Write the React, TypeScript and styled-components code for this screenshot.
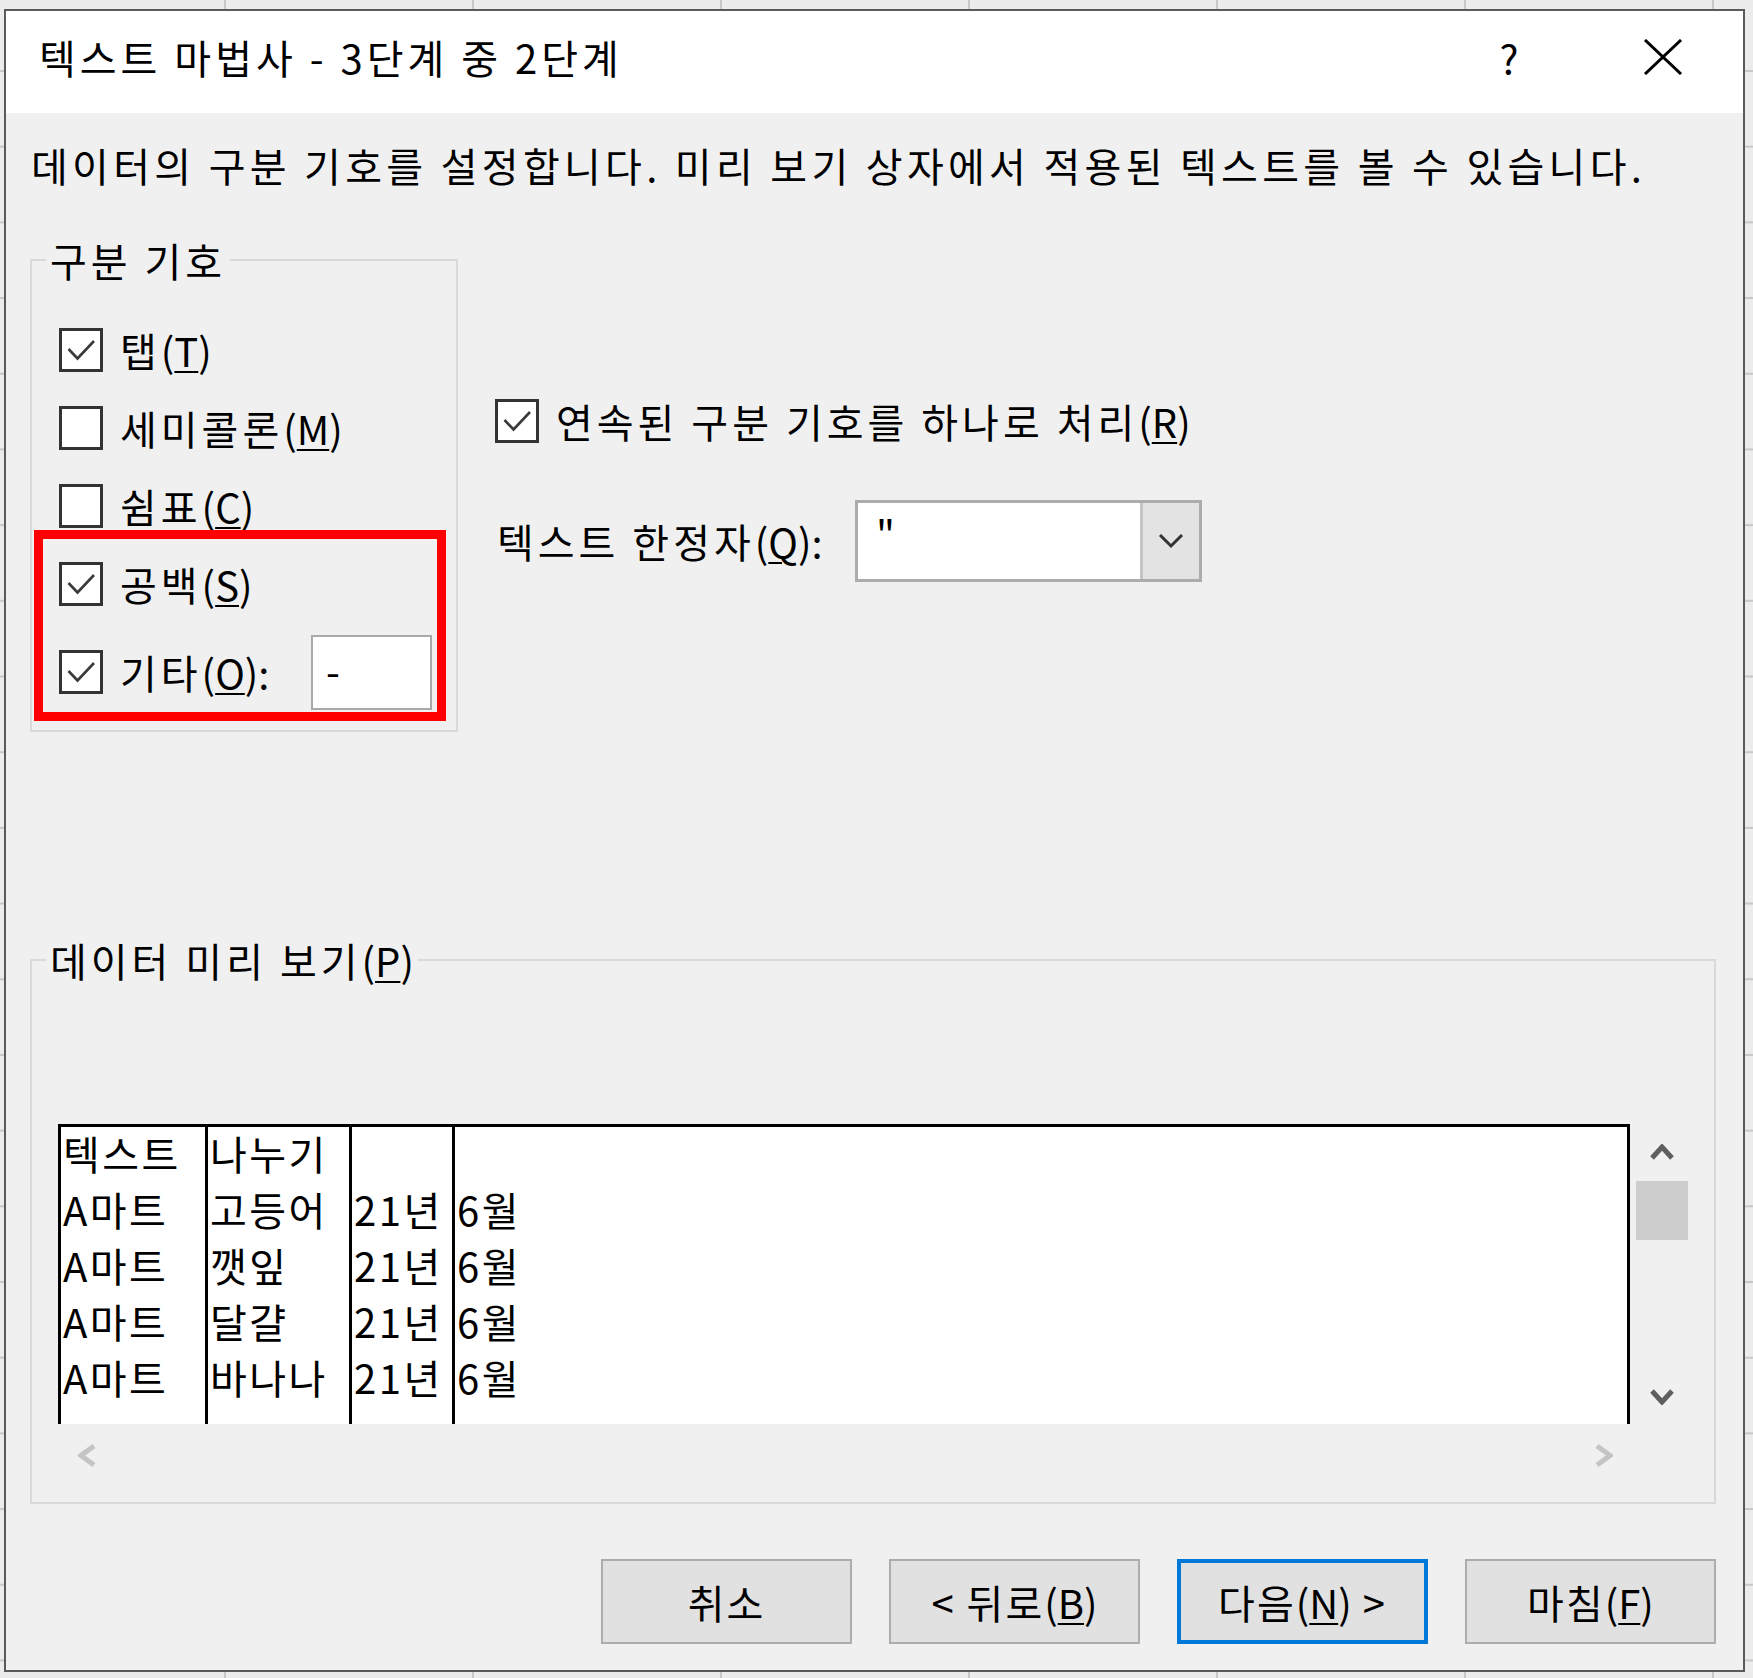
import React from "react";
import styled, { createGlobalStyle } from "styled-components";

const FONT = `"Noto Sans CJK KR", "Noto Sans", sans-serif`;

const GlobalStyle = createGlobalStyle`
  html, body { margin: 0; padding: 0; }
  body {
    font-family: ${FONT};
    background-color: #ececec;
    background-image:
      linear-gradient(to right, #c8c8c8 2px, transparent 2px),
      linear-gradient(to bottom, #c8c8c8 2px, transparent 2px);
    background-size: 248px 75.7px;
    background-position: 224px 70px;
    min-height: 1678px;
  }
`;

const Page = styled.div`
  padding: 9px 0 0 4px;
`;

const Dialog = styled.div`
  position: relative;
  width: 1741px;
  height: 1663px;
  box-sizing: border-box;
  border: 2px solid #5a5a5a;
  background: #f0f0f0;
  display: flex;
  flex-direction: column;
  color: #000;
  font-size: 40px;
  letter-spacing: 4px;
`;

const TitleBar = styled.div`
  height: 102px;
  flex-shrink: 0;
  box-sizing: border-box;
  padding-bottom: 10px;
  background: #fff;
  display: flex;
  align-items: center;
  padding-left: 33px;
`;

const Title = styled.div`
  flex: 1;
  font-size: 40px;
  line-height: 50px;
`;

const HelpButton = styled.div`
  width: 60px;
  text-align: center;
  font-size: 40px;
  line-height: 50px;
  letter-spacing: 0;
`;

const CloseButton = styled.div`
  width: 80px;
  margin-left: 84px;
  margin-right: 40px;
  display: flex;
  justify-content: center;
  align-items: center;
`;

const Body = styled.div`
  flex: 1;
  display: flex;
  flex-direction: column;
  padding: 0 27px 0 24px;
`;

const Description = styled.div`
  margin-top: 27px;
  line-height: 50px;
  padding-left: 1px;
  letter-spacing: 4.3px;
  white-space: nowrap;
`;

const MiddleRow = styled.div`
  display: flex;
  align-items: flex-start;
  gap: 37px;
  margin-top: 47px;
`;

const GroupBox = styled.fieldset<{ $w: number; $pl: number; $pr: number; $pb: number }>`
  width: ${(p) => p.$w}px;
  box-sizing: border-box;
  margin: 0;
  border: 2px solid #d9d9d9;
  padding: 0 ${(p) => p.$pr}px ${(p) => p.$pb}px ${(p) => p.$pl}px;
  min-width: 0;
`;

const Legend = styled.legend<{ $ml: number }>`
  padding: 0 4px;
  margin-left: ${(p) => p.$ml}px;
  line-height: 46px;
  white-space: nowrap;
`;

const OptionList = styled.div`
  display: flex;
  flex-direction: column;
  margin-top: 28px;
`;

const OptionRow = styled.div<{ $h: number; $mt?: number }>`
  display: flex;
  align-items: center;
  height: ${(p) => p.$h}px;
  margin-top: ${(p) => p.$mt ?? 0}px;
  gap: 17px;
  white-space: nowrap;
`;

const Box = styled.span`
  width: 44px;
  height: 44px;
  box-sizing: border-box;
  border: 3px solid #333;
  background: #fff;
  flex-shrink: 0;
  display: flex;
`;

const Label = styled.span<{ $w?: number }>`
  line-height: 50px;
  ${(p) => (p.$w ? `width: ${p.$w}px;` : "")}
  flex-shrink: 0;
`;

const MnemonicWrap = styled.span`
  letter-spacing: 0;
`;

const U = styled.u`
  text-underline-offset: 4px;
  text-decoration-thickness: 2px;
`;

const Acc = ({ k }: { k: string }) => (
  <MnemonicWrap>
    (<U>{k}</U>)
  </MnemonicWrap>
);

const OtherInput = styled.div`
  margin-left: auto;
  width: 121px;
  height: 75px;
  box-sizing: border-box;
  border: 2px solid #a9a9a9;
  background: #fff;
  padding-left: 13px;
  line-height: 66px;
`;

const RightColumn = styled.div`
  display: flex;
  flex-direction: column;
  margin-top: 159px;
`;

const ComboRow = styled.div`
  display: flex;
  align-items: center;
  margin-top: 54px;
  padding-left: 2px;
  white-space: nowrap;
`;

const Combo = styled.div`
  width: 347px;
  height: 82px;
  box-sizing: border-box;
  border: 3px solid #acacac;
  background: #fff;
  display: flex;
`;

const ComboText = styled.div`
  flex: 1;
  padding-left: 18px;
  line-height: 60px;
`;

const ComboButton = styled.div`
  width: 56px;
  background: #e3e3e3;
  border-left: 3px solid #c4c4c4;
  display: flex;
  align-items: center;
  justify-content: center;
`;

const PreviewGroup = styled(GroupBox)`
  margin-top: 205px;
`;

const PreviewArea = styled.div`
  display: flex;
  margin-top: 141px;
`;

const PreviewBox = styled.div`
  width: 1574px;
  height: 300px;
  box-sizing: border-box;
  border: 3px solid #000;
  border-bottom: none;
  background: #fff;
  display: flex;
  overflow: hidden;
`;

const Column = styled.div<{ $w?: number; $first?: boolean }>`
  ${(p) => (p.$w ? `width: ${p.$w}px; flex-shrink: 0;` : "flex: 1;")}
  box-sizing: border-box;
  border-left: ${(p) => (p.$first ? "none" : "3px solid #000")};
  padding-left: 2px;
`;

const Cell = styled.div`
  height: 56px;
  line-height: 52px;
  font-size: 40px;
  letter-spacing: 2.5px;
  white-space: nowrap;
`;

const VScroll = styled.div`
  width: 58px;
  padding-left: 6px;
  box-sizing: border-box;
  display: flex;
  flex-direction: column;
  height: 300px;
`;

const ArrowCell = styled.div<{ $h: number }>`
  height: ${(p) => p.$h}px;
  display: flex;
  align-items: center;
  justify-content: center;
`;

const Thumb = styled.div`
  height: 59px;
  background: #cdcdcd;
`;

const Spacer = styled.div`
  flex: 1;
`;

const HScroll = styled.div`
  width: 1574px;
  height: 62px;
  box-sizing: border-box;
  display: flex;
  align-items: center;
  justify-content: space-between;
  padding: 0 19px 0 20px;
`;

const ButtonRow = styled.div`
  display: flex;
  justify-content: flex-end;
  gap: 37px;
  margin-top: 55px;
`;

const Button = styled.div<{ $default?: boolean }>`
  width: 251px;
  height: 85px;
  box-sizing: border-box;
  background: #e1e1e1;
  border: ${(p) => (p.$default ? "4px solid #0078d7" : "2px solid #adadad")};
  display: flex;
  align-items: center;
  justify-content: center;
  white-space: pre;
  letter-spacing: 2px;
`;

const Annotation = styled.div`
  position: absolute;
  left: 28px;
  top: 519px;
  width: 412px;
  height: 191px;
  box-sizing: border-box;
  border: 9px solid #ff0000;
  pointer-events: none;
`;

const Check = () => (
  <svg width="38" height="38" viewBox="0 0 38 38">
    <path d="M6.5 18 L15.5 27.5 L32 10" fill="none" stroke="#3a3a3a" strokeWidth="2.6" />
  </svg>
);

const CheckBox = ({ checked }: { checked: boolean }) => <Box>{checked && <Check />}</Box>;

const Chevron = ({ dir, color, w, h }: { dir: "up" | "down" | "left" | "right"; color: string; w: number; h: number }) => {
  const d =
    dir === "up"
      ? `M3 ${h - 3} L${w / 2} 3 L${w - 3} ${h - 3}`
      : dir === "down"
      ? `M3 3 L${w / 2} ${h - 3} L${w - 3} 3`
      : dir === "left"
      ? `M${w - 3} 3 L3 ${h / 2} L${w - 3} ${h - 3}`
      : `M3 3 L${w - 3} ${h / 2} L3 ${h - 3}`;
  return (
    <svg width={w} height={h} viewBox={`0 0 ${w} ${h}`}>
      <path d={d} fill="none" stroke={color} strokeWidth="5" />
    </svg>
  );
};

const columns: { w?: number; cells: string[] }[] = [
  { w: 144, cells: ["텍스트", "A마트", "A마트", "A마트", "A마트"] },
  { w: 144, cells: ["나누기", "고등어", "깻잎", "달걀", "바나나"] },
  { w: 103, cells: ["", "21년", "21년", "21년", "21년"] },
  { cells: ["", "6월", "6월", "6월", "6월"] },
];

export default function App() {
  return (
    <>
      <GlobalStyle />
      <Page>
        <Dialog>
          <TitleBar>
            <Title>텍스트 마법사 - 3단계 중 2단계</Title>
            <HelpButton>?</HelpButton>
            <CloseButton>
              <svg width="40" height="36" viewBox="0 0 40 36">
                <path d="M2 1 L38 35 M38 1 L2 35" stroke="#000" strokeWidth="3" fill="none" />
              </svg>
            </CloseButton>
          </TitleBar>
          <Body>
            <Description>
              데이터의 구분 기호를 설정합니다. 미리 보기 상자에서 적용된 텍스트를 볼 수 있습니다.
            </Description>
            <MiddleRow>
              <GroupBox $w={428} $pl={27} $pr={24} $pb={19}>
                <Legend $ml={-13}>구분 기호</Legend>
                <OptionList>
                  <OptionRow $h={78}>
                    <CheckBox checked />
                    <Label>
                      탭<Acc k="T" />
                    </Label>
                  </OptionRow>
                  <OptionRow $h={78}>
                    <CheckBox checked={false} />
                    <Label>
                      세미콜론<Acc k="M" />
                    </Label>
                  </OptionRow>
                  <OptionRow $h={78}>
                    <CheckBox checked={false} />
                    <Label>
                      쉼표<Acc k="C" />
                    </Label>
                  </OptionRow>
                  <OptionRow $h={78}>
                    <CheckBox checked />
                    <Label>
                      공백<Acc k="S" />
                    </Label>
                  </OptionRow>
                  <OptionRow $h={78} $mt={10}>
                    <CheckBox checked />
                    <Label>
                      기타<Acc k="O" />:
                    </Label>
                    <OtherInput>-</OtherInput>
                  </OptionRow>
                </OptionList>
              </GroupBox>
              <RightColumn>
                <OptionRow $h={50}>
                  <CheckBox checked />
                  <Label>
                    연속된 구분 기호를 하나로 처리<Acc k="R" />
                  </Label>
                </OptionRow>
                <ComboRow>
                  <Label $w={358}>
                    텍스트 한정자<Acc k="Q" />:
                  </Label>
                  <Combo>
                    <ComboText>"</ComboText>
                    <ComboButton>
                      <svg width="26" height="16" viewBox="0 0 26 16">
                        <path d="M2 2 L13 13 L24 2" fill="none" stroke="#333" strokeWidth="3" />
                      </svg>
                    </ComboButton>
                  </Combo>
                </ComboRow>
              </RightColumn>
            </MiddleRow>
            <PreviewGroup $w={1686} $pl={26} $pr={26} $pb={16}>
              <Legend $ml={-12}>
                데이터 미리 보기<Acc k="P" />
              </Legend>
              <PreviewArea>
                <PreviewBox>
                  {columns.map((c, i) => (
                    <Column key={i} $w={c.w} $first={i === 0}>
                      {c.cells.map((t, j) => (
                        <Cell key={j}>{t}</Cell>
                      ))}
                    </Column>
                  ))}
                </PreviewBox>
                <VScroll>
                  <ArrowCell $h={57}>
                    <Chevron dir="up" color="#5f5f5f" w={26} h={17} />
                  </ArrowCell>
                  <Thumb />
                  <Spacer />
                  <ArrowCell $h={56}>
                    <Chevron dir="down" color="#5f5f5f" w={26} h={17} />
                  </ArrowCell>
                </VScroll>
              </PreviewArea>
              <HScroll>
                <Chevron dir="left" color="#c4c4c4" w={19} h={25} />
                <Chevron dir="right" color="#c4c4c4" w={19} h={25} />
              </HScroll>
            </PreviewGroup>
            <ButtonRow>
              <Button>취소</Button>
              <Button>
                {"< 뒤로"}
                <Acc k="B" />
              </Button>
              <Button $default>
                다음
                <Acc k="N" />
                {" >"}
              </Button>
              <Button>
                마침<Acc k="F" />
              </Button>
            </ButtonRow>
          </Body>
          <Annotation />
        </Dialog>
      </Page>
    </>
  );
}
